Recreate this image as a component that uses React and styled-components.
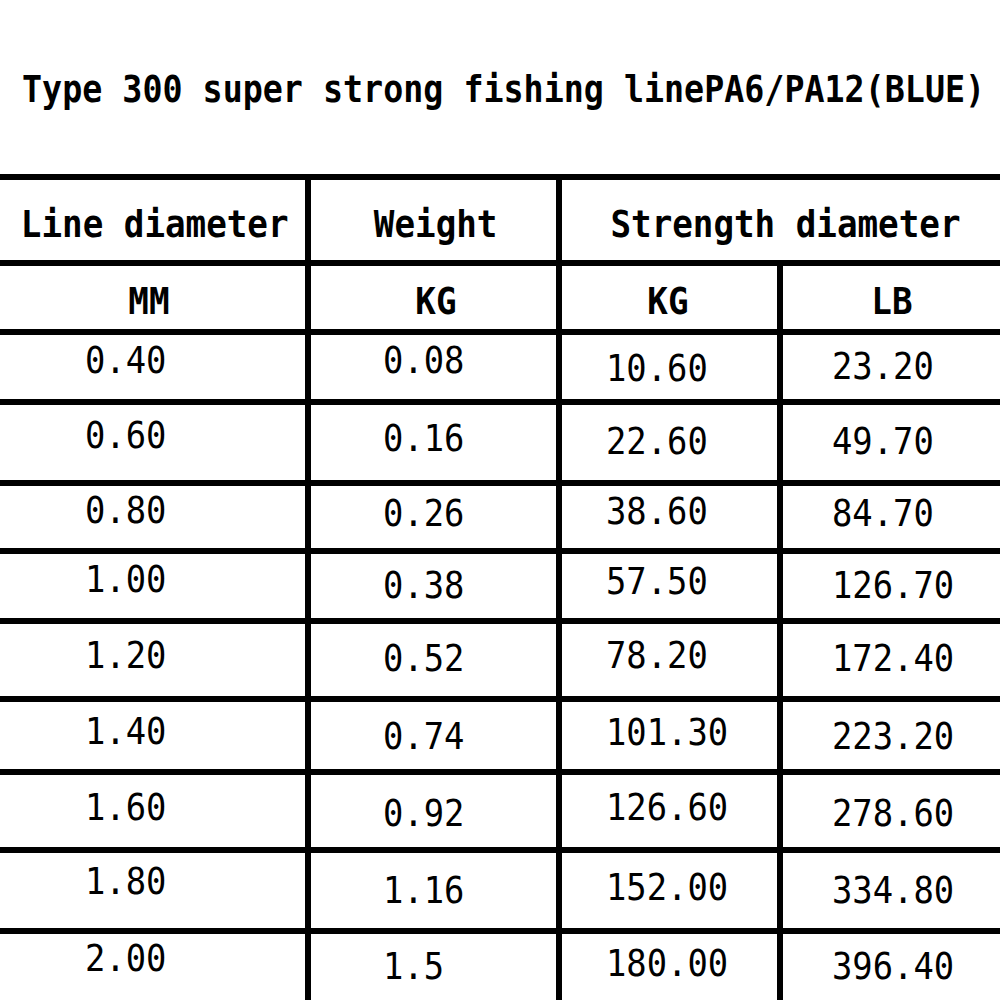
import React from "react";
import styled, { createGlobalStyle } from "styled-components";

const Global = createGlobalStyle`
  html, body {
    margin: 0;
    padding: 0;
    background: #ffffff;
    overflow: hidden;
  }
  #root {
    width: 1000px;
    height: 1000px;
    overflow: hidden;
  }
`;

const FONT = `"DejaVu Sans Mono", "Liberation Mono", monospace`;

const Page = styled.div`
  width: 1000px;
  height: 1000px;
  background: #ffffff;
  color: #000;
  font-family: ${FONT};
  display: flex;
  flex-direction: column;
`;

const TitleBar = styled.div`
  height: 174px;
  flex-shrink: 0;
  box-sizing: border-box;
  padding: 70px 0 0 22px;
`;

const TitleText = styled.h1`
  margin: 0;
  display: inline-block;
  font-size: 38px;
  line-height: 38px;
  font-weight: bold;
  white-space: nowrap;
  transform: scaleX(0.877);
  transform-origin: left center;
`;

const Grid = styled.div`
  flex-shrink: 0;
  display: grid;
  grid-template-columns: 305px 245px 215px 217px;
  grid-template-rows: ${(p) => p.$rows};
  column-gap: 6px;
  row-gap: 6px;
  padding-top: 6px;
  background: #000;
`;

const Cell = styled.div`
  background: #ffffff;
  display: flex;
  align-items: center;
  justify-content: ${(p) => (p.$center ? "center" : "flex-start")};
  padding-left: ${(p) => p.$pad || 0}px;
  grid-column: ${(p) => p.$span || "auto"};
  overflow: hidden;
  min-width: 0;
`;

const Label = styled.span`
  display: inline-block;
  font-size: 38px;
  line-height: 38px;
  font-weight: ${(p) => (p.$bold ? "bold" : "normal")};
  white-space: nowrap;
  transform-origin: ${(p) => (p.$center ? "center" : "left")} center;
  transform: translate(${(p) => p.$dx || 0}px, ${(p) => p.$dy || 0}px)
    scaleX(${(p) => p.$sx || 0.89});
`;

const colPad = [85, 72, 44, 49];

const rows = [
  { h: 64, c: [["0.40", -7], ["0.08", -7], ["10.60", 1], ["23.20", -1]] },
  { h: 75, c: [["0.60", -8], ["0.16", -5], ["22.60", -2], ["49.70", -2]] },
  { h: 62, c: [["0.80", -7], ["0.26", -4], ["38.60", -6], ["84.70", -4]] },
  { h: 64, c: [["1.00", -7], ["0.38", -1], ["57.50", -5], ["126.70", -1]] },
  { h: 72, c: [["1.20", -5], ["0.52", -2], ["78.20", -5], ["172.40", -2]] },
  { h: 67, c: [["1.40", -5], ["0.74", 0], ["101.30", -4], ["223.20", 0]] },
  { h: 72, c: [["1.60", -4], ["0.92", 2], ["126.60", -4], ["278.60", 2]] },
  { h: 75, c: [["1.80", -10], ["1.16", -1], ["152.00", -4], ["334.80", -1]] },
  { h: 70, c: [["2.00", -11], ["1.5", -3], ["180.00", -6], ["396.40", -3]] },
];

const gridRows = ["80px", "63px", ...rows.map((r) => `${r.h}px`)].join(" ");

const HeadCell = ({ text, span, dx, dy }) => (
  <Cell $center $span={span}>
    <Label $center $bold $dx={dx} $dy={dy} $sx={0.9}>
      {text}
    </Label>
  </Cell>
);

export default function App() {
  return (
    <Page>
      <Global />
      <TitleBar>
        <TitleText>Type 300 super strong fishing linePA6/PA12(BLUE)</TitleText>
      </TitleBar>
      <Grid $rows={gridRows}>
        <HeadCell text="Line diameter" dx={2} dy={4} />
        <HeadCell text="Weight" dx={2} dy={4} />
        <HeadCell text="Strength diameter" span="3 / 5" dx={4} dy={4} />
        <HeadCell text="MM" dx={-4} dy={3} />
        <HeadCell text="KG" dx={2} dy={3} />
        <HeadCell text="KG" dx={-2} dy={3} />
        <HeadCell text="LB" dx={0} dy={3} />
        {rows.map((r, i) =>
          r.c.map(([v, dy], j) => (
            <Cell key={`${i}-${j}`} $pad={colPad[j]}>
              <Label $dy={dy}>{v}</Label>
            </Cell>
          ))
        )}
      </Grid>
    </Page>
  );
}
